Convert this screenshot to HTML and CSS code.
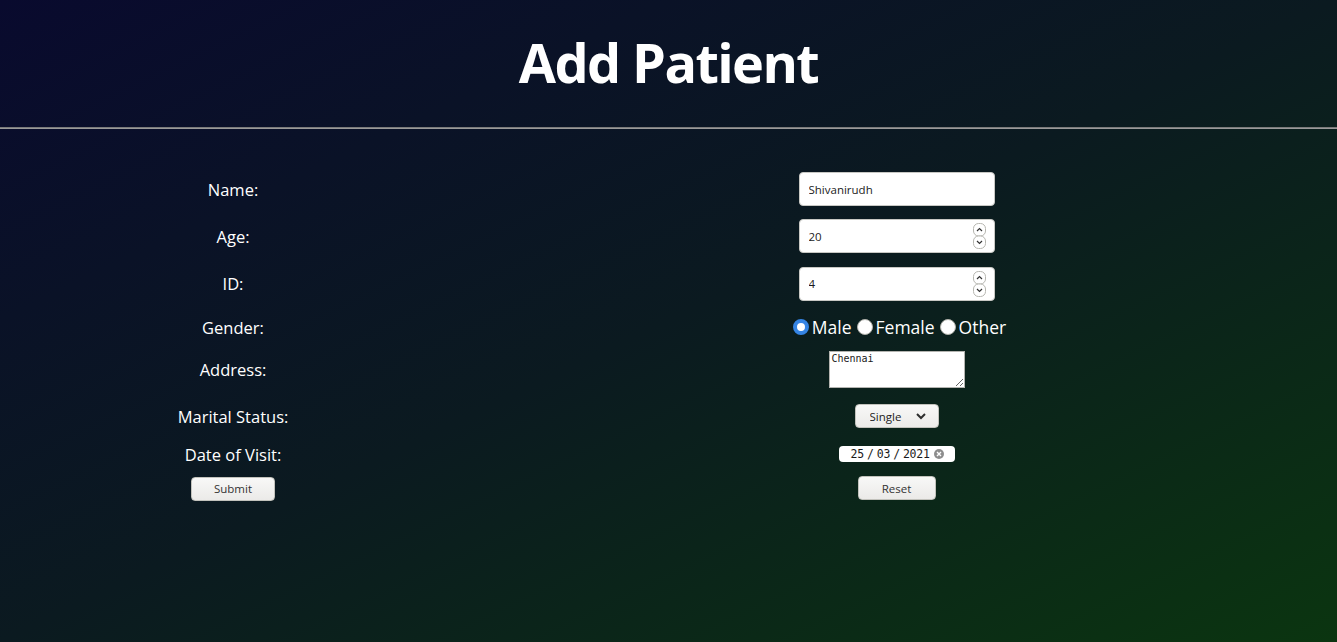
FILE: index.html
```html
<!DOCTYPE html>
<html lang="en">
<head>
<meta charset="utf-8">
<title>Add Patient</title>
<link rel="stylesheet" href="styles.css">
</head>
<body>
<header class="header">
  <h1 class="title">Add Patient</h1>
</header>
<hr class="divider">
<form class="form">
  <div class="row r1">
    <label class="label">Name:</label>
    <div class="field"><input class="text-input" type="text" value="Shivanirudh"></div>
  </div>
  <div class="row r2">
    <label class="label">Age:</label>
    <div class="field">
      <div class="num-input">
        <input class="num-value" type="text" value="20">
        <span class="spin">
          <svg width="13" height="26" viewBox="0 0 13 26"><rect x="0.5" y="0.5" width="12" height="12.5" rx="5" fill="#fff" stroke="#b6b6b0"/><rect x="0.5" y="13" width="12" height="12.5" rx="5" fill="#fff" stroke="#b6b6b0"/><path d="M4 8 L6.5 5.5 L9 8" fill="none" stroke="#333" stroke-width="1.2"/><path d="M4 18 L6.5 20.5 L9 18" fill="none" stroke="#333" stroke-width="1.2"/></svg>
        </span>
      </div>
    </div>
  </div>
  <div class="row r3">
    <label class="label">ID:</label>
    <div class="field">
      <div class="num-input">
        <input class="num-value" type="text" value="4">
        <span class="spin">
          <svg width="13" height="26" viewBox="0 0 13 26"><rect x="0.5" y="0.5" width="12" height="12.5" rx="5" fill="#fff" stroke="#b6b6b0"/><rect x="0.5" y="13" width="12" height="12.5" rx="5" fill="#fff" stroke="#b6b6b0"/><path d="M4 8 L6.5 5.5 L9 8" fill="none" stroke="#333" stroke-width="1.2"/><path d="M4 18 L6.5 20.5 L9 18" fill="none" stroke="#333" stroke-width="1.2"/></svg>
        </span>
      </div>
    </div>
  </div>
  <div class="row r4">
    <label class="label">Gender:</label>
    <div class="field radios">
      <label class="radio-opt"><input class="radio" type="radio" name="gender" checked>Male</label>
      <label class="radio-opt"><input class="radio" type="radio" name="gender">Female</label>
      <label class="radio-opt"><input class="radio" type="radio" name="gender">Other</label>
    </div>
  </div>
  <div class="row r5">
    <label class="label">Address:</label>
    <div class="field"><textarea class="area">Chennai</textarea></div>
  </div>
  <div class="row r6">
    <label class="label">Marital Status:</label>
    <div class="field">
      <div class="select-wrap">
        <select class="select"><option>Single</option><option>Married</option></select>
        <svg class="chev" width="10" height="7" viewBox="0 0 10 7"><path d="M1 1 L5 5 L9 1" fill="none" stroke="#2e2e2e" stroke-width="2"/></svg>
      </div>
    </div>
  </div>
  <div class="row r7">
    <label class="label">Date of Visit:</label>
    <div class="field">
      <div class="date-input">
        <span class="date-text"><span>25</span><span>/</span><span>03</span><span>/</span><span>2021</span></span>
        <svg class="clear" width="10" height="10" viewBox="0 0 10 10"><circle cx="5" cy="5" r="5" fill="#8d8d8d"/><path d="M3 3 L7 7 M7 3 L3 7" stroke="#fff" stroke-width="1.4"/></svg>
      </div>
    </div>
  </div>
  <div class="row r8">
    <div class="cell"><button class="btn btn-submit" type="button">Submit</button></div>
    <div class="field"><button class="btn btn-reset" type="button">Reset</button></div>
  </div>
</form>
</body>
</html>
```

FILE: styles.css
```css
html, body {
  margin: 0;
  padding: 0;
  height: 100%;
}
body {
  background: linear-gradient(to bottom right, #090a2e 0%, #0b1a20 50%, #0b3510 100%);
  font-family: "Open Sans", "Noto Sans", sans-serif;
  color: #fff;
  min-height: 642px;
}
.header {
  height: 127px;
  display: flex;
  justify-content: center;
}
.title {
  margin: 0;
  padding-top: 24px;
  font-size: 54px;
  font-weight: 700;
  line-height: 76px;
  letter-spacing: -1.6px;
}
.divider {
  margin: 0;
  border: none;
  border-top: 1px solid #7a7a7a;
  border-bottom: 1px solid #9a9a9a;
  height: 0;
}
.form {
  margin-top: 37px;
}
.row {
  display: grid;
  grid-template-columns: 466px 1fr;
  align-items: center;
}
.r1 { height: 46px; }
.r2 { height: 48px; }
.r3 { height: 47px; }
.r4 { height: 40px; }
.r5 { height: 45px; }
.r6 { height: 48px; }
.r7 { height: 28px; }
.r8 { height: 40px; }
.label, .cell {
  text-align: center;
  font-size: 16.5px;
}
.field {
  display: flex;
  justify-content: center;
  padding-right: 10px;
}
.text-input, .num-input {
  box-sizing: border-box;
  width: 196px;
  height: 34px;
  border: 1px solid #c8c8c4;
  border-radius: 4px;
  background: #fff;
  font-family: "Open Sans", sans-serif;
  font-size: 11.5px;
  color: #1a1a1a;
  padding: 0 9px;
}
.num-input {
  display: flex;
  align-items: center;
  padding: 0 9px 0 9px;
}
.num-value {
  flex: 1;
  min-width: 0;
  border: none;
  outline: none;
  padding: 0;
  font: inherit;
  color: inherit;
  background: transparent;
}
.spin {
  display: flex;
  margin-right: -1px;
}
.radios {
  align-items: center;
  font-size: 17.5px;
  gap: 5px;
  padding-right: 4px;
}
.radio-opt {
  display: flex;
  align-items: center;
}
.radio {
  appearance: none;
  -webkit-appearance: none;
  margin: 0 3px 0 0;
  width: 16px;
  height: 16px;
  border-radius: 50%;
  background: #fff;
  border: 1px solid #b0b0aa;
  box-sizing: border-box;
  flex-shrink: 0;
}
.radio:checked {
  background: #fff;
  border: 4.5px solid #3584e4;
}
.area {
  box-sizing: border-box;
  width: 136px;
  height: 37px;
  margin: 0;
  border: 1px solid #b4b4b0;
  background: #fff;
  font-family: "DejaVu Sans Mono", monospace;
  font-size: 10px;
  padding: 1px 2px;
  color: #1a1a1a;
  resize: both;
}
.select-wrap {
  position: relative;
  display: flex;
}
.select {
  appearance: none;
  -webkit-appearance: none;
  box-sizing: border-box;
  width: 84px;
  height: 24px;
  border: 1px solid #c2c2bc;
  border-radius: 4px;
  background: linear-gradient(#f8f8f7, #ecebe9);
  font-family: "Open Sans", sans-serif;
  font-size: 11.5px;
  color: #222;
  padding: 0 0 0 14px;
}
.chev {
  position: absolute;
  right: 13px;
  top: 9px;
  pointer-events: none;
}
.date-input {
  box-sizing: border-box;
  width: 116px;
  height: 16px;
  border-radius: 4px;
  background: #fff;
  display: flex;
  align-items: center;
  padding: 0 0 0 12px;
  gap: 4px;
  color: #1a1a1a;
}
.date-text {
  display: flex;
  gap: 3px;
  font-family: "DejaVu Sans Mono", monospace;
  font-size: 11.5px;
  letter-spacing: -0.2px;
  white-space: nowrap;
}
.clear {
  flex-shrink: 0;
}
.btn {
  box-sizing: border-box;
  height: 24px;
  border: 1px solid #c2c2bc;
  border-radius: 4px;
  background: linear-gradient(#f8f8f7, #ebeae8);
  font-family: "Open Sans", sans-serif;
  font-size: 11.5px;
  color: #333;
  padding: 0;
}
.btn-submit { width: 84px; }
.btn-reset { width: 78px; }
```
